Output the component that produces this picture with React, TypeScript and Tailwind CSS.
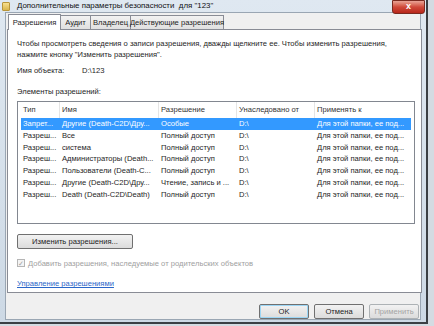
import React from "react"

const rows = [
  { type: "Запрет...", name: "Другие (Death-C2D\\Дру...", perm: "Особые", from: "D:\\", to: "Для этой папки, ее под..." },
  { type: "Разреш...", name: "Все", perm: "Полный доступ", from: "D:\\", to: "Для этой папки, ее под..." },
  { type: "Разреш...", name: "система", perm: "Полный доступ", from: "D:\\", to: "Для этой папки, ее под..." },
  { type: "Разреш...", name: "Администраторы (Death...", perm: "Полный доступ", from: "D:\\", to: "Для этой папки, ее под..." },
  { type: "Разреш...", name: "Пользователи (Death-C...", perm: "Полный доступ", from: "D:\\", to: "Для этой папки, ее под..." },
  { type: "Разреш...", name: "Другие (Death-C2D\\Дру...", perm: "Чтение, запись и ...", from: "D:\\", to: "Для этой папки, ее под..." },
  { type: "Разреш...", name: "Death (Death-C2D\\Death)", perm: "Полный доступ", from: "D:\\", to: "Для этой папки, ее под..." },
]

const cols = ["w-[39px]", "w-[99px]", "w-[78px]", "w-[78px]", "flex-1"]

function Row({ cells, cls }: { cells: string[]; cls: string }) {
  return (
    <div className={"flex h-[11.8px] items-center " + cls}>
      {cells.map((c, i) => (
        <div key={i} className={cols[i] + " pl-[2px] whitespace-nowrap overflow-hidden"}>{c}</div>
      ))}
    </div>
  )
}

export default function App() {
  const btn = "h-[15px] border border-[#707070] rounded-[2px] bg-gradient-to-b from-[#f2f2f2] to-[#dcdcdc] flex items-center justify-center text-[7.6px] text-[#222] whitespace-nowrap"
  const tab = "h-[14px] bg-gradient-to-b from-[#f2f2f2] to-[#e0e0e0] border border-l-0 border-b-0 border-[#898c95] flex items-center justify-center whitespace-nowrap"
  return (
    <div className="w-[434px] h-[326px] bg-[#d4dbe2] overflow-hidden text-[#1e1e1e]" style={{ fontFamily: '"Liberation Sans", Arial, sans-serif' }}>
      <div className="w-[428px] h-[324px] flex flex-col border-r-2 border-b-2 border-[#3b3f44] bg-gradient-to-b from-[#dfe8f1] to-[#cdd9e5]">
        {/* title bar */}
        <div className="h-[17px] flex items-center relative">
          <div className="ml-[2px] w-[8px] h-[9px] bg-gradient-to-b from-[#f7df8e] to-[#d9b64c] rounded-[1px] border border-[#b8953a]" />
          <div className="ml-[7px] text-[7.9px] text-[#111] whitespace-pre">Дополнительные параметры безопасности  для "123"</div>
          <div className="absolute right-[1px] top-0 w-[33px] h-[14px] rounded-b-[3px] border border-[#7a2a20] bg-gradient-to-b from-[#e8a396] via-[#d0493a] to-[#b8261a] flex items-center justify-center text-white text-[9px] font-bold">x</div>
        </div>
        {/* client area */}
        <div className="flex-1 mx-[5px] mb-[2px] bg-[#f0f0f0] border border-[#9aa6b3] flex flex-col px-[1px]">
          {/* tabs */}
          <div className="flex items-end h-[16px] pl-[1px] text-[7.6px]">
            <div className="h-[16px] w-[53px] bg-white border border-b-0 border-[#898c95] flex items-center justify-center relative z-10 -mb-px whitespace-nowrap">Разрешения</div>
            <div className={tab + " w-[30px]"}>Аудит</div>
            <div className={tab + " w-[40px]"}>Владелец</div>
            <div className={tab + " w-[93px]"}>Действующие разрешения</div>
          </div>
          {/* panel */}
          <div className="h-[264px] w-[415px] bg-white border border-[#898c95] text-[7.6px] px-[9px] pt-[8px]">
            <div className="leading-[11px]">
              <div>Чтобы просмотреть сведения о записи разрешения, дважды щелкните ее. Чтобы изменить разрешения,</div>
              <div>нажмите кнопку "Изменить разрешения".</div>
            </div>
            <div className="flex mt-[5px]">
              <div className="w-[65px]">Имя объекта:</div>
              <div>D:\123</div>
            </div>
            <div className="mt-[10px]">Элементы разрешений:</div>
            <div className="mt-[3px] w-[398px] h-[123px] border border-[#828790] px-[3px]">
              <div className="flex h-[16px] items-center text-[#333]">
                {["Тип", "Имя", "Разрешение", "Унаследовано от", "Применять к"].map((h, i) => (
                  <div key={h} className={cols[i] + " pl-[2px] h-full flex items-center border-r border-[#e5e5e5] last:border-r-0"}>{h}</div>
                ))}
              </div>
              {rows.map((r, i) => (
                <Row key={i} cells={[r.type, r.name, r.perm, r.from, r.to]} cls={i === 0 ? "bg-[#3399ff] text-white" : ""} />
              ))}
            </div>
            <div className={btn + " mt-[10px] w-[116px]"}>Изменить разрешения...</div>
            <div className="flex items-center mt-[9px] text-[#a0a0a0]">
              <div className="w-[8px] h-[8px] border border-[#b5b5b5] bg-[#f4f4f4] flex items-center justify-center text-[7px] leading-none">✓</div>
              <div className="ml-[3px]">Добавить разрешения, наследуемые от родительских объектов</div>
            </div>
            <div className="mt-[9px] text-[#2a66c8] underline">Управление разрешениями</div>
          </div>
          {/* bottom buttons */}
          <div className="flex justify-end gap-[5px] mt-[11px]">
            <div className={btn + " w-[50px] border-[#3c7fb1] shadow-[inset_0_0_0_1px_#9cd6f5]"}>OK</div>
            <div className={btn + " w-[50px]"}>Отмена</div>
            <div className={btn + " w-[50px] text-[#a3a3a3] border-[#adb2b5]"}>Применить</div>
          </div>
        </div>
      </div>
    </div>
  )
}
